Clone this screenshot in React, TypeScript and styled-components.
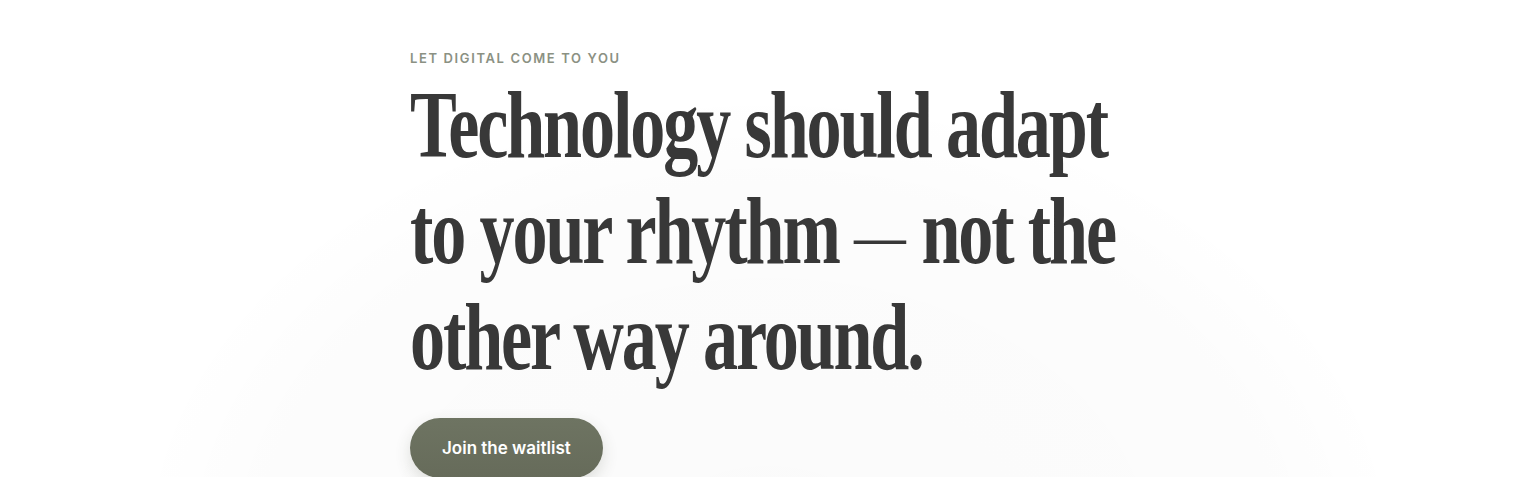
import styled, { createGlobalStyle } from 'styled-components';

const GlobalStyle = createGlobalStyle`
  html, body {
    margin: 0;
    padding: 0;
    background: #ffffff;
  }
  * {
    box-sizing: border-box;
  }
`

const Hero = () => {
    return (
        <>
            <GlobalStyle />
            <Page>
                <Content>
                    <Eyebrow>Let digital come to you</Eyebrow>
                    <Headline>
                        Technology should adapt<br />
                        to your rhythm <Dash>—</Dash> not the<br />
                        other way around.
                    </Headline>
                    <CtaButton type="button">Join the waitlist</CtaButton>
                </Content>
            </Page>
        </>
    );
};

export default Hero;

const Page = styled.main`
    min-height: 477px;
    overflow: hidden;
    background:
        radial-gradient(ellipse 640px 470px at 768px 560px, rgba(0, 0, 0, 0.018) 0%, rgba(0, 0, 0, 0.01) 80%, rgba(0, 0, 0, 0) 100%),
        #ffffff;
    padding-top: 50px;
`

const Content = styled.div`
    width: 716px;
    margin: 0 auto;
    display: flex;
    flex-direction: column;
    align-items: flex-start;
`

const Eyebrow = styled.p`
    margin: 0;
    font-family: Inter, "Liberation Sans", sans-serif;
    font-size: 13px;
    font-weight: 600;
    letter-spacing: 0.125em;
    text-transform: uppercase;
    color: #8b9183;
    line-height: 16px;
`

const Headline = styled.h1`
    margin: 6px 0 0;
    font-family: "Liberation Serif", serif;
    font-weight: 700;
    font-size: 96px;
    line-height: 106px;
    letter-spacing: -0.03em;
    color: #383838;
    white-space: nowrap;
    transform: scaleX(0.73);
    transform-origin: left top;
`

const Dash = styled.span`
    font-weight: 400;
    font-size: 0.74em;
    letter-spacing: 0;
    line-height: 1;
    vertical-align: 0.06em;
`

const CtaButton = styled.button`
    margin-top: 28px;
    height: 60px;
    padding: 0 32px;
    border: none;
    border-radius: 30px;
    background: linear-gradient(180deg, #6e7462 0%, #666b5a 100%);
    box-shadow: 0 6px 16px rgba(60, 66, 50, 0.16);
    color: #ffffff;
    font-family: Inter, "Liberation Sans", sans-serif;
    font-size: 17px;
    font-weight: 600;
    cursor: pointer;
`
